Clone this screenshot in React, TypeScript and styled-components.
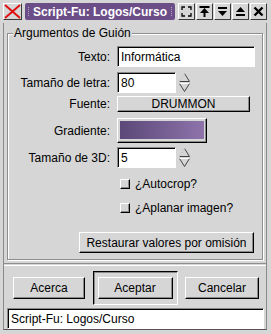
import styled, { createGlobalStyle } from "styled-components";

const GlobalStyle = createGlobalStyle`
  html, body {
    margin: 0;
    padding: 0;
    background: #d6d6d6;
  }
  body {
    font-family: "Liberation Sans", Arial, Helvetica, sans-serif;
    font-size: 12px;
    color: #000;
  }
`;

const GRAY = "#d6d6d6";

const Window = styled.div`
  width: 271px;
  height: 334px;
  background: ${GRAY};
  overflow: hidden;
`;

const TitleBar = styled.div`
  display: flex;
  align-items: center;
  height: 17px;
  padding: 3px 4px 2px 3px;
  gap: 2px;
`;

const Bevel = styled.div`
  box-sizing: border-box;
  height: 17px;
  border: 1px solid;
  border-color: #fff #3a3a3a #3a3a3a #fff;
  background: ${GRAY};
  display: flex;
  align-items: center;
  justify-content: center;
`;

const CloseBox = styled(Bevel)`
  width: 19px;
  margin-right: 1px;
`;

const TitleLabel = styled.div`
  box-sizing: border-box;
  width: 152px;
  height: 17px;
  background: #6b4e87;
  color: #fff;
  font-weight: bold;
  font-size: 12px;
  display: flex;
  align-items: center;
  justify-content: center;
  position: relative;
  border-radius: 2px;
`;

const Grip = styled.span<{ $side: "left" | "right" }>`
  position: absolute;
  top: 4px;
  ${(p) => (p.$side === "left" ? "left: 3px;" : "right: 3px;")}
  width: 1px;
  height: 9px;
  background: repeating-linear-gradient(
    to bottom,
    #b9a5cc 0 1px,
    transparent 1px 2px
  );
`;

const WinButtons = styled.div`
  display: flex;
  gap: 1px;
  margin-left: 1px;
`;

const WinButton = styled(Bevel)`
  width: 17px;
`;

const Body = styled.div`
  box-sizing: border-box;
  margin: 1px 4px 0 3px;
  height: 307px;
  border-left: 1px solid #8a8a8a;
  border-right: 1px solid #8a8a8a;
  border-bottom: 1px solid #555;
  display: flex;
  flex-direction: column;
`;

const Frame = styled.fieldset`
  margin: 3px 3px 0 3px;
  padding: 6px 0 6px 0;
  border: 1px solid #8e8e8e;
  box-shadow: inset 1px 1px 0 #fff, 1px 1px 0 #fff;
  height: 234px;
  box-sizing: border-box;
  min-width: 0;
  flex: none;
`;

const Legend = styled.legend`
  padding: 0 1px;
  margin-left: 5px;
  font-size: 12px;
  line-height: 14px;
  background: ${GRAY};
`;

const Form = styled.div`
  display: grid;
  grid-template-columns: 102px 1fr;
  column-gap: 7px;
  align-items: center;
`;

const Label = styled.div`
  text-align: right;
  white-space: nowrap;
`;

const Cell = styled.div<{ $mt?: number }>`
  display: flex;
  align-items: center;
  margin-top: ${(p) => p.$mt ?? 0}px;
  gap: 2px;
`;

const Entry = styled.div<{ $w: number }>`
  box-sizing: border-box;
  width: ${(p) => p.$w}px;
  height: 21px;
  background: #fff;
  border: 1px solid;
  border-color: #8a8a8a #fff #fff #8a8a8a;
  box-shadow: inset 1px 1px 0 #000;
  padding: 2px 0 0 3px;
  line-height: 16px;
  font-size: 12px;
  white-space: nowrap;
  overflow: hidden;
`;

const Button = styled.div<{ $w: number; $h?: number }>`
  box-sizing: border-box;
  width: ${(p) => p.$w}px;
  height: ${(p) => p.$h ?? 21}px;
  border: 1px solid;
  border-color: #fff #000 #000 #fff;
  box-shadow: inset -1px -1px 0 #8a8a8a;
  background: ${GRAY};
  display: flex;
  align-items: center;
  justify-content: center;
  font-size: 12px;
  white-space: nowrap;
`;

const GradientSwatch = styled.div`
  width: 84px;
  height: 18px;
  margin-top: -1px;
  background: linear-gradient(to right, #5c4879, #8d73aa);
`;

const CheckRow = styled.div<{ $mt: number }>`
  grid-column: 2;
  display: flex;
  align-items: center;
  gap: 5px;
  padding-left: 3px;
  margin-top: ${(p) => p.$mt}px;
  height: 14px;
`;

const Check = styled.span`
  box-sizing: border-box;
  width: 10px;
  height: 10px;
  border: 1px solid;
  border-color: #fff #000 #000 #fff;
  box-shadow: inset -1px -1px 0 #8a8a8a;
  background: ${GRAY};
`;

const ResetRow = styled.div`
  display: flex;
  justify-content: flex-end;
  padding-right: 8px;
  margin-top: 17px;
`;

const Separator = styled.div`
  margin-top: 3px;
  height: 1px;
  border-top: 1px solid #8e8e8e;
  border-bottom: 1px solid #fff;
`;

const ActionArea = styled.div`
  display: flex;
  align-items: center;
  justify-content: space-between;
  padding: 5px 7px 0 9px;
  height: 34px;
`;

const DefaultFrame = styled.div`
  box-sizing: border-box;
  width: 85px;
  height: 34px;
  border: 1px solid;
  border-color: #000 #fff #fff #000;
  box-shadow: inset 1px 1px 0 #8a8a8a;
  display: flex;
  align-items: center;
  justify-content: center;
`;

const StatusRow = styled.div`
  padding: 3px 2px 0 3px;
`;

const Spin = () => (
  <svg width="13" height="21" viewBox="0 0 13 21">
    <polygon points="6.5,1.5 11.5,9.5 1.5,9.5" fill="#d6d6d6" stroke="#444" strokeWidth="1" />
    <polyline points="1.5,9.5 6.5,1.5" fill="none" stroke="#fff" strokeWidth="1" />
    <polygon points="1.5,11.5 11.5,11.5 6.5,19.5" fill="#d6d6d6" stroke="#444" strokeWidth="1" />
    <polyline points="1.5,11.5 11.5,11.5" fill="none" stroke="#fff" strokeWidth="1" />
  </svg>
);

const App = () => {
  return (
    <Window>
      <GlobalStyle />
      <TitleBar>
        <CloseBox>
          <svg width="17" height="15" viewBox="0 0 17 15">
            <path d="M1 1 L16 14 M16 1 L1 14" stroke="#e01010" strokeWidth="2" />
          </svg>
        </CloseBox>
        <TitleLabel>
          <Grip $side="left" />
          Script-Fu: Logos/Curso
          <Grip $side="right" />
        </TitleLabel>
        <WinButtons>
          <WinButton>
            <svg width="11" height="11" viewBox="0 0 11 11">
              <path d="M1 4 V1 H4 M7 1 H10 V4 M10 7 V10 H7 M4 10 H1 V7" stroke="#000" fill="none" strokeWidth="1.3" />
            </svg>
          </WinButton>
          <WinButton>
            <svg width="11" height="11" viewBox="0 0 11 11">
              <path d="M0.5 1 H10.5" stroke="#000" strokeWidth="2" />
              <polygon points="5.5,2 10,7 1,7" fill="#000" />
              <path d="M5.5 6 V11" stroke="#000" strokeWidth="2" />
            </svg>
          </WinButton>
          <WinButton>
            <svg width="11" height="11" viewBox="0 0 11 11">
              <path d="M1 2 H10" stroke="#000" strokeWidth="2" />
              <polygon points="1,5 10,5 5.5,10" fill="#000" />
            </svg>
          </WinButton>
          <WinButton>
            <svg width="11" height="11" viewBox="0 0 11 11">
              <polygon points="5.5,1 10,6 1,6" fill="#000" />
              <path d="M1 9 H10" stroke="#000" strokeWidth="2" />
            </svg>
          </WinButton>
          <WinButton>
            <svg width="11" height="11" viewBox="0 0 11 11">
              <path d="M1.5 1.5 L9.5 9.5 M9.5 1.5 L1.5 9.5" stroke="#000" strokeWidth="2.4" />
            </svg>
          </WinButton>
        </WinButtons>
      </TitleBar>

      <Body>
        <Frame>
          <Legend>Argumentos de Guión</Legend>
          <Form>
            <Label>Texto:</Label>
            <Cell>
              <Entry $w={138}>Informática</Entry>
            </Cell>

            <Label style={{ marginTop: 5 }}>Tamaño de letra:</Label>
            <Cell $mt={5}>
              <Entry $w={59}>80</Entry>
              <Spin />
            </Cell>

            <Label style={{ marginTop: 3 }}>Fuente:</Label>
            <Cell $mt={3}>
              <Button $w={133} $h={16}>DRUMMON</Button>
            </Cell>

            <Label style={{ marginTop: 6 }}>Gradiente:</Label>
            <Cell $mt={6}>
              <Button $w={90} $h={25}>
                <GradientSwatch />
              </Button>
            </Cell>

            <Label style={{ marginTop: 4 }}>Tamaño de 3D:</Label>
            <Cell $mt={4}>
              <Entry $w={59}>5</Entry>
              <Spin />
            </Cell>

            <CheckRow $mt={9}>
              <Check />
              ¿Autocrop?
            </CheckRow>
            <CheckRow $mt={10}>
              <Check />
              ¿Aplanar imagen?
            </CheckRow>
          </Form>
          <ResetRow>
            <Button $w={175}>Restaurar valores por omisión</Button>
          </ResetRow>
        </Frame>
        <Separator />
        <ActionArea>
          <Button $w={72} $h={22}>Acerca</Button>
          <DefaultFrame>
            <Button $w={75} $h={22}>Aceptar</Button>
          </DefaultFrame>
          <Button $w={74} $h={22}>Cancelar</Button>
        </ActionArea>
        <StatusRow>
          <Entry $w={257}>Script-Fu: Logos/Curso</Entry>
        </StatusRow>
      </Body>
    </Window>
  );
};

export default App;
